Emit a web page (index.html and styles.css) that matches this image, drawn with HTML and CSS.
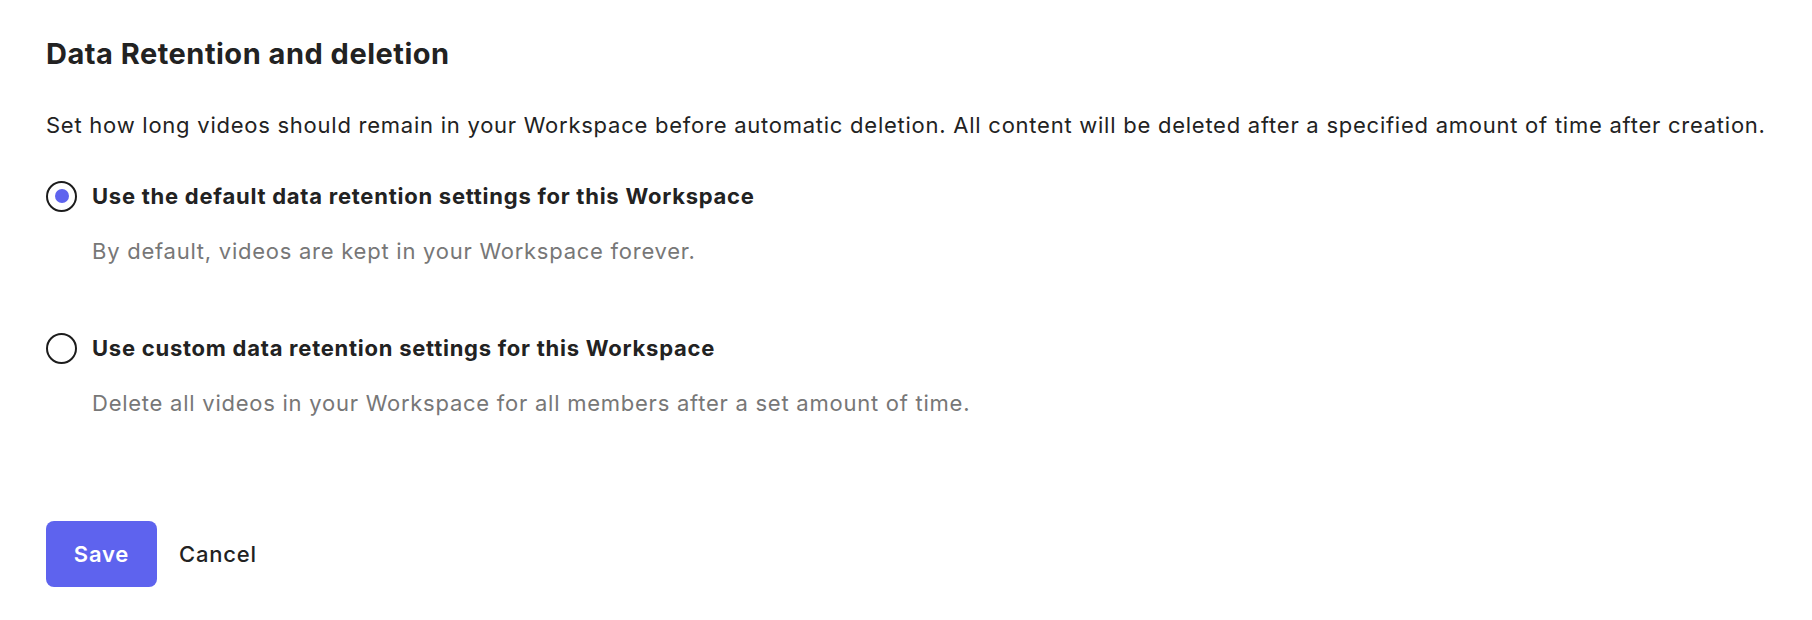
FILE: index.html
```html
<!DOCTYPE html>
<html lang="en">
<head>
  <meta charset="UTF-8" />
  <meta name="viewport" content="width=device-width, initial-scale=1.0" />
  <title>Data Retention and deletion</title>
  <link rel="stylesheet" href="styles.css">
</head>
<body>
  <div class="page">
    <h1>Data Retention and deletion</h1>
    <p class="intro">Set how long videos should remain in your Workspace before automatic deletion. All content will be deleted after a specified amount of time after creation.</p>

    <div class="option">
      <label class="choice">
        <input type="radio" name="retention" value="default" checked />
        <span class="radio"></span>
        <span class="choice-label">Use the default data retention settings for this Workspace</span>
      </label>
      <p class="hint">By default, videos are kept in your Workspace forever.</p>
    </div>

    <div class="option second">
      <label class="choice">
        <input type="radio" name="retention" value="custom" />
        <span class="radio"></span>
        <span class="choice-label">Use custom data retention settings for this Workspace</span>
      </label>
      <p class="hint">Delete all videos in your Workspace for all members after a set amount of time.</p>
    </div>

    <div class="actions">
      <button class="save">Save</button>
      <button class="cancel">Cancel</button>
    </div>
  </div>
</body>
</html>
```

FILE: styles.css
```css
body {
  margin: 0;
  font-family: Inter, 'Noto Sans', sans-serif;
  color: #222;
  background: #fff;
}

.page {
  padding: 36px 46px;
}

h1 {
  margin: 0;
  font-size: 29px;
  line-height: 36px;
  font-weight: 700;
  letter-spacing: 0.5px;
}

.intro {
  margin: 38px 0 0;
  font-size: 22px;
  line-height: 30px;
  letter-spacing: 0.75px;
  white-space: nowrap;
}

.option {
  margin-top: 40px;
}

.option.second {
  margin-top: 66px;
}

.choice {
  display: flex;
  align-items: center;
  gap: 15px;
  height: 32px;
  cursor: pointer;
}

.choice input {
  display: none;
}

.radio {
  box-sizing: border-box;
  width: 31px;
  height: 31px;
  border: 2px solid #1c1c1c;
  border-radius: 50%;
  display: flex;
  align-items: center;
  justify-content: center;
}

.choice input:checked + .radio::after {
  content: "";
  width: 14px;
  height: 14px;
  border-radius: 50%;
  background: #5e63ee;
}

.choice-label {
  font-size: 22px;
  font-weight: 700;
  letter-spacing: 0.75px;
}

.hint {
  margin: 24px 0 0 46px;
  font-size: 22px;
  line-height: 30px;
  letter-spacing: 0.75px;
  color: #777;
}

.actions {
  margin-top: 103px;
  display: flex;
  align-items: center;
  gap: 22px;
}

button {
  font-family: inherit;
  font-size: 22px;
  font-weight: 600;
  letter-spacing: 0.8px;
  border: none;
  cursor: pointer;
}

.save {
  width: 111px;
  height: 66px;
  border-radius: 8px;
  background: #5e63ee;
  color: #fff;
}

.cancel {
  background: none;
  color: #222;
  padding: 0;
  font-weight: 500;
}
```
